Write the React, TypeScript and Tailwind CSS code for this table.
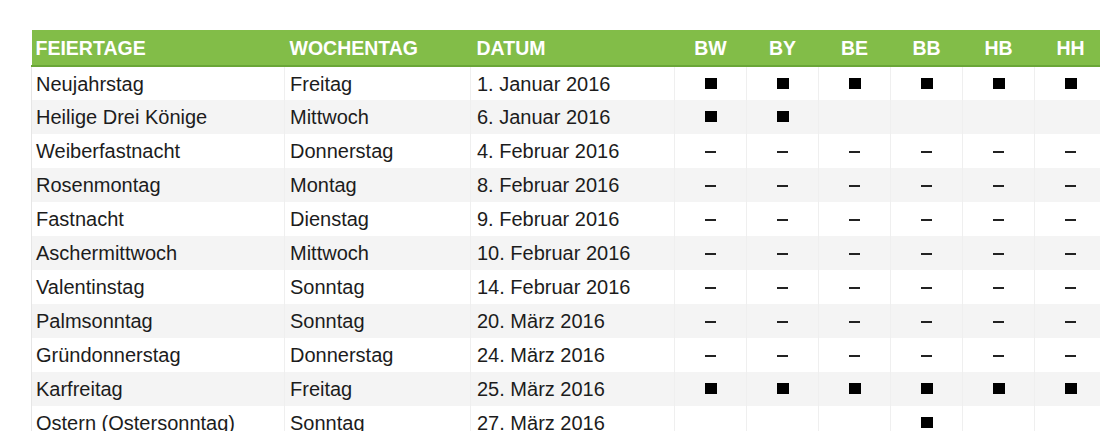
const states = ["BW", "BY", "BE", "BB", "HB", "HH"];

type Mark = "x" | "-" | "";

interface Holiday {
  name: string;
  weekday: string;
  date: string;
  marks: Mark[];
}

const all = (m: Mark): Mark[] => states.map(() => m);

const holidays: Holiday[] = [
  { name: "Neujahrstag", weekday: "Freitag", date: "1. Januar 2016", marks: all("x") },
  { name: "Heilige Drei Könige", weekday: "Mittwoch", date: "6. Januar 2016", marks: ["x", "x", "", "", "", ""] },
  { name: "Weiberfastnacht", weekday: "Donnerstag", date: "4. Februar 2016", marks: all("-") },
  { name: "Rosenmontag", weekday: "Montag", date: "8. Februar 2016", marks: all("-") },
  { name: "Fastnacht", weekday: "Dienstag", date: "9. Februar 2016", marks: all("-") },
  { name: "Aschermittwoch", weekday: "Mittwoch", date: "10. Februar 2016", marks: all("-") },
  { name: "Valentinstag", weekday: "Sonntag", date: "14. Februar 2016", marks: all("-") },
  { name: "Palmsonntag", weekday: "Sonntag", date: "20. März 2016", marks: all("-") },
  { name: "Gründonnerstag", weekday: "Donnerstag", date: "24. März 2016", marks: all("-") },
  { name: "Karfreitag", weekday: "Freitag", date: "25. März 2016", marks: all("x") },
  { name: "Ostern (Ostersonntag)", weekday: "Sonntag", date: "27. März 2016", marks: ["", "", "", "x", "", ""] },
];

function MarkCell({ mark }: { mark: Mark }) {
  if (mark === "x") {
    return <span className="relative -top-[2px] inline-block h-[11px] w-[12px] bg-black align-middle" />;
  }
  if (mark === "-") {
    return <span className="relative -top-[1px] inline-block h-[2px] w-[11px] bg-[#222] align-middle" />;
  }
  return null;
}

export default function App() {
  return (
    <div
      className="h-[431px] w-[1100px] overflow-hidden bg-white pl-[31px] pt-[30px] text-[#1c1c1c]"
      style={{ fontFamily: '"Liberation Sans", Arial, sans-serif' }}
    >
      <table className="w-[1075px] table-fixed border-collapse">
        <colgroup>
          <col className="w-[253px]" />
          <col className="w-[186px]" />
          <col className="w-[204px]" />
          {states.map((s) => (
            <col key={s} className="w-[72px]" />
          ))}
        </colgroup>
        <thead>
          <tr className="h-[36px] border-b-2 border-[#6aa637] bg-[#82bd48] text-[19.5px] font-bold text-white">
            <th className="px-[4px] pt-[2px] text-left font-bold">FEIERTAGE</th>
            <th className="px-[5px] pt-[2px] text-left font-bold">WOCHENTAG</th>
            <th className="px-[6px] pt-[2px] text-left font-bold">DATUM</th>
            {states.map((s) => (
              <th key={s} className="pt-[2px] text-center font-bold">
                {s}
              </th>
            ))}
          </tr>
        </thead>
        <tbody className="text-[20px]">
          {holidays.map((h, i) => (
            <tr
              key={h.name}
              className={`h-[34px] ${i % 2 === 1 ? "bg-[#f4f4f4]" : "bg-white"}`}
            >
              <td className="border-l border-[#e6e6e6] px-[4px] whitespace-nowrap">{h.name}</td>
              <td className="border-l border-[#efefef] px-[5px] whitespace-nowrap">{h.weekday}</td>
              <td className="border-l border-[#efefef] px-[6px] whitespace-nowrap">{h.date}</td>
              {h.marks.map((m, j) => (
                <td key={j} className="border-l border-[#efefef] text-center leading-none">
                  <MarkCell mark={m} />
                </td>
              ))}
            </tr>
          ))}
        </tbody>
      </table>
    </div>
  );
}
